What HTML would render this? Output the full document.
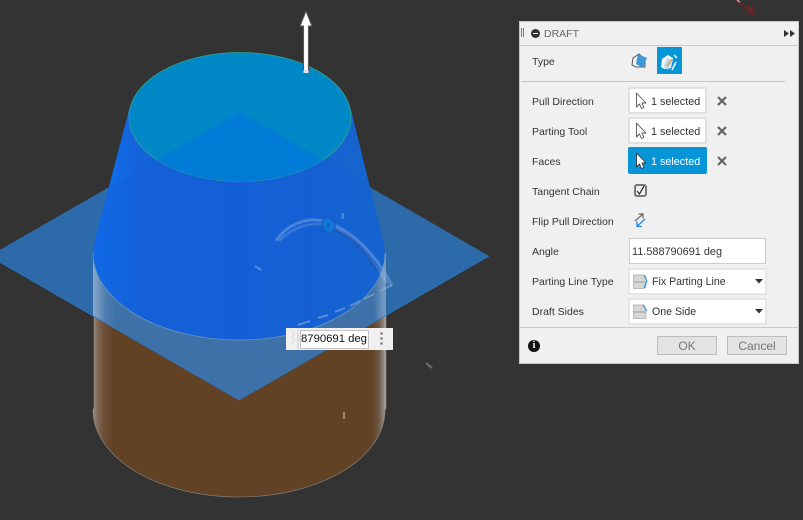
<!DOCTYPE html>
<html><head><meta charset="utf-8">
<style>
html,body{margin:0;padding:0;width:803px;height:520px;overflow:hidden;background:#333}
body{position:relative;font-family:"Liberation Sans",Arial,sans-serif;font-size:10.5px;color:#333}
svg{position:absolute;left:0;top:0}
.a{position:absolute;box-sizing:border-box;white-space:nowrap}
.l{position:absolute;left:532px;line-height:14px;margin-top:1px}
.f{position:absolute;left:628px;width:79px;height:27px;background:#fff;border:2px solid #e0e0e0;border-radius:2px;box-sizing:border-box;line-height:27px;padding-left:21px;font-size:10.8px}
.f.on{background:#0696d7;border-color:#0696d7;color:#fff}
.d{position:absolute;left:628px;width:139px;height:27px;background:#fff;border:2px solid #e6e6e6;box-sizing:border-box;line-height:25px;padding-left:22px;font-size:10.6px}
.btn{position:absolute;top:336px;width:60px;height:19px;background:#e3e3e3;border:1px solid #bdbdbd;box-sizing:border-box;text-align:center;line-height:18px;font-size:12px;color:#777}
</style></head><body>
<svg width="803" height="520" viewBox="0 0 803 520">
<defs>
<linearGradient id="br" x1="93" x2="385" y1="0" y2="0" gradientUnits="userSpaceOnUse">
<stop offset="0" stop-color="#a09488"/><stop offset=".012" stop-color="#84705f"/><stop offset=".035" stop-color="#6f5038"/><stop offset=".07" stop-color="#614225"/><stop offset=".955" stop-color="#614225"/><stop offset=".98" stop-color="#6f5a48"/><stop offset=".995" stop-color="#8f867e"/><stop offset="1" stop-color="#a8a09a"/>
</linearGradient>
<linearGradient id="bl" x1="93" x2="385" y1="0" y2="0" gradientUnits="userSpaceOnUse">
<stop offset="0" stop-color="#1070f0"/><stop offset=".07" stop-color="#106ce8"/><stop offset=".16" stop-color="#1462da"/><stop offset=".5" stop-color="#1560d6"/><stop offset="1" stop-color="#1665cc"/>
</linearGradient>
<linearGradient id="wl" x1="93" x2="385" y1="0" y2="0" gradientUnits="userSpaceOnUse">
<stop offset="0" stop-color="#fff" stop-opacity=".4"/><stop offset=".045" stop-color="#fff" stop-opacity=".08"/><stop offset=".08" stop-color="#fff" stop-opacity="0"/><stop offset=".96" stop-color="#fff" stop-opacity="0"/><stop offset="1" stop-color="#fff" stop-opacity=".3"/>
</linearGradient>
<clipPath id="top"><ellipse cx="240" cy="117" rx="111" ry="64.5"/></clipPath>
<clipPath id="cyl"><path d="M93 253V410C93 458 158 497 239 497C320 497 385 458 385 410V253Z"/></clipPath>
<clipPath id="plane"><path d="M-11 256L240 112L489 256L239 400Z"/></clipPath>
<clipPath id="cone"><path d="M129 110L95 240L93 253C93 301 158 340 239 340C320 340 385 301 385 253L383 240L351 110Z"/></clipPath>
<filter id="b" x="-20%" y="-20%" width="140%" height="140%"><feGaussianBlur stdDeviation=".7"/></filter>
</defs>
<!-- brown cylinder -->
<path d="M94 253V408L93 410C93 458 158 497 239 497C320 497 385 458 385 410L386 408V253Z" fill="url(#br)" stroke="#8f8a84" stroke-width=".6"/>
<!-- plane -->
<path d="M-11 256L240 112L489 256L239 400Z" fill="#2d6aa9"/>
<path d="M-11 256L240 112L489 256L239 400Z" fill="#3d71a8" clip-path="url(#cyl)"/>
<g clip-path="url(#plane)"><rect x="93" y="253" width="293" height="160" fill="url(#wl)"/></g>
<path d="M-11 256L239 400L489 256" fill="none" stroke="#2b74c4" stroke-width=".8"/>
<!-- blue cone -->
<path d="M129 110L95 240L93 253C93 301 158 340 239 340C320 340 385 301 385 253L383 240L351 110Z" fill="url(#bl)"/>
<path d="M240 112L489 256L239 400L-11 256Z" fill="#1560d8" opacity=".4" clip-path="url(#cone)"/>
<path d="M93 253C93 301 158 340 239 340C320 340 385 301 385 253" fill="none" stroke="#6f93bd" stroke-width=".8"/>
<!-- top face -->
<ellipse cx="240" cy="117" rx="111" ry="64.5" fill="#0088c6" stroke="#2fa58c" stroke-width=".8"/>
<path d="M240 112L370 187H110Z" fill="#007cd6" clip-path="url(#top)"/>
<!-- arrow -->
<path d="M306 11L312 26H308.500V72H303.500V26H300Z" fill="#fff" stroke="#555" stroke-width="1.100" stroke-linejoin="round"/>
<path d="M303.500 70H308.500V73H303.500Z" fill="#dfe8f0"/>
<!-- angle manipulator -->
<g fill="none" filter="url(#b)">
<path d="M276 241C287 224 308 216 327 222C355 232 378 258 392 286" stroke="#8fb3e6" stroke-width="2.400" opacity=".55"/>
<path d="M279 241C292 228 310 221 328 225C350 233 372 258 388 284" stroke="#ffffff" stroke-width="1.300" opacity=".3"/>
<path d="M333 228C350 236 366 252 379 272" stroke="#123f88" stroke-width="1.600" opacity=".7"/>
</g>
<path d="M392 285L380 291M374 294L364 299M360 301L350 306M345 308L335 312M328 315L318 318M310 321L298 325" fill="none" stroke="#9ab7d4" stroke-width="2" opacity=".5"/>
<ellipse cx="328.500" cy="225" rx="7.500" ry="9" fill="#1a5cb8" opacity=".75" transform="rotate(-20 328.500 225)"/>
<ellipse cx="328.500" cy="225" rx="5.500" ry="7" fill="#0b78e0" transform="rotate(-20 328.500 225)"/>
<ellipse cx="328.500" cy="225" rx="1.500" ry="2.500" fill="#1a5ca8"/>
<!-- small ticks -->
<path d="M342.800 213V219" stroke="#a9bfe4" stroke-width="2" opacity=".45"/>
<path d="M255 266L261 270" stroke="#a0bde8" stroke-width="2" opacity=".45"/>
<path d="M426 363L432 368" stroke="#8a8a8a" stroke-width="2.400" opacity=".6"/>
<path d="M344 412V419" stroke="#a99a88" stroke-width="2.200" opacity=".8"/>
<!-- axis x -->
<path d="M736 0L746 8" stroke="#7a2228" stroke-width="1.500"/>
<path d="M737 0L740 2" stroke="#aaa" stroke-width="1.500"/>
<text x="746" y="15" font-family="Liberation Sans" font-size="13" font-weight="bold" fill="#8b1a1f">X</text>
</svg>

<!-- value box -->
<div class="a" style="left:286px;top:328px;width:107px;height:22px;background:#f0f0f0"></div>
<div class="a" style="left:297px;top:328px;width:2px;height:22px;background:#ddd"></div>
<div class="a" style="left:300px;top:330px;width:69px;height:19px;background:#fff;border:1px solid #c4c4c4;font-size:11.300px;line-height:17px;color:#111;overflow:hidden">8790691 deg</div>
<svg width="803" height="520" style="pointer-events:none"><g fill="#8a8a8a"><circle cx="381.500" cy="333.500" r="1.400"/><circle cx="381.500" cy="338.500" r="1.400"/><circle cx="381.500" cy="343.500" r="1.400"/></g><path d="M292 331L294 334L292 337L294 340L292 343L294 346" fill="none" stroke="#ccc" stroke-dasharray="1 1"/></svg>

<!-- panel -->
<div class="a" style="left:519px;top:21px;width:280px;height:343px;background:#f0f0f0;border:1px solid #c9c9c9"></div>
<div class="a" style="left:520px;top:45px;width:278px;height:1px;background:#c9c9c9"></div>
<div class="a" style="left:521px;top:28px;width:1px;height:9px;background:#777"></div>
<div class="a" style="left:523px;top:28px;width:1px;height:9px;background:#777"></div>
<div class="a" style="left:531px;top:29px;width:9px;height:9px;background:#333;border-radius:50%"></div>
<div class="a" style="left:533px;top:33px;width:5px;height:1px;background:#fff"></div>
<div class="a" style="left:544px;top:27px;line-height:14px;color:#666">DRAFT</div>
<svg width="803" height="520"><path d="M784 30V37L789 33.500ZM790 30V37L795 33.500Z" fill="#333"/></svg>

<div class="l" style="top:54px">Type</div>
<div class="a" style="left:657px;top:47px;width:25px;height:27px;background:#0696d7"></div>
<svg width="803" height="520">
<path d="M632 65L633 58L639 54L645 59L645 67L636 67Z" fill="#f4f4f4" stroke="#555" stroke-width="1"/>
<path d="M638 54L647 58L643 68L636 64Z" fill="#3f97d9"/>
<path d="M661 67L662 59L668 55L673 58L671 68L664 69Z" fill="#f4f4f4"/>
<path d="M667 58L673 61L668 70L664 66Z" fill="#bcd9ee"/>
<path d="M667 66L672 59" stroke="#e49a3c" stroke-width="1.500"/>
<path d="M674 55L677 58M676 62L672 70" stroke="#fff" stroke-width="1.500"/>
</svg>
<div class="a" style="left:521px;top:81px;width:264px;height:1px;background:#c4c4c4"></div>

<div class="l" style="top:94px">Pull Direction</div>
<div class="f" style="top:87px;overflow:hidden">1 selected</div>
<div class="l" style="top:124px">Parting Tool</div>
<div class="f" style="top:117px;overflow:hidden">1 selected</div>
<div class="l" style="top:154px">Faces</div>
<div class="f on" style="top:147px;overflow:hidden">1 selected</div>
<svg width="803" height="520">
<g fill="#fff" stroke="#555" stroke-width=".9" stroke-linejoin="round">
<path d="M636.500 93V107L639.500 104L641.500 108.500L644 107.500L642 103H646Z"/>
<path d="M636.500 123V137L639.500 134L641.500 138.500L644 137.500L642 133H646Z"/>
<path d="M636.500 153V167L639.500 164L641.500 168.500L644 167.500L642 163H646Z" stroke="#333"/>
</g>
<g stroke="#666" stroke-width="2.200">
<path d="M718 97L726 105M726 97L718 105"/>
<path d="M718 127L726 135M726 127L718 135"/>
<path d="M718 157L726 165M726 157L718 165"/>
</g>
</svg>

<div class="l" style="top:184px">Tangent Chain</div>
<div class="a" style="left:634px;top:184px;width:13px;height:13px;background:#f0f0f0;border:2px solid #777;border-radius:3px"></div>
<svg width="803" height="520"><path d="M637 191L639.500 194L644 186" fill="none" stroke="#222" stroke-width="1.200"/>
<path d="M635 221L642.500 214.500M638.500 214H643V218.500" fill="none" stroke="#666" stroke-width="1.200"/>
<path d="M645 219L637.500 226M637 221.500V226.500H642" fill="none" stroke="#1f8ae0" stroke-width="1.300"/></svg>
<div class="l" style="top:214px">Flip Pull Direction</div>

<div class="l" style="top:244px">Angle</div>
<div class="a" style="left:629px;top:238px;width:137px;height:26px;background:#fff;border:1px solid #ccc;line-height:27px;padding-left:2px;font-size:10.9px;overflow:hidden">11.588790691 deg</div>

<div class="l" style="top:274px">Parting Line Type</div>
<div class="d" style="top:268px">Fix Parting Line</div>
<div class="l" style="top:304px">Draft Sides</div>
<div class="d" style="top:298px">One Side</div>
<svg width="803" height="520">
<path d="M633.500 275H644L646 277V287L644 288.500H633.500Z" fill="#d6d6d6" stroke="#aaa" stroke-width=".7"/>
<path d="M633.500 282H645" stroke="#888" stroke-width=".8"/>
<path d="M644 275L647 281L644 288" fill="none" stroke="#1f8ae0" stroke-width="1"/>
<path d="M633.500 305H644L646 311V318.500H633.500Z" fill="#d6d6d6" stroke="#aaa" stroke-width=".7"/>
<path d="M633.500 312H646" stroke="#888" stroke-width=".8"/>
<path d="M643 305L647 311" fill="none" stroke="#1f8ae0" stroke-width="1"/>
<path d="M755 279H763L759 283.500ZM755 309H763L759 313.500Z" fill="#333"/>
</svg>

<div class="a" style="left:520px;top:327px;width:278px;height:1px;background:#c9c9c9"></div>
<div class="a" style="left:528px;top:340px;width:12px;height:12px;background:#111;border-radius:50%;color:#fff;font:bold 10px/12px 'Liberation Serif',serif;text-align:center">i</div>
<div class="btn" style="left:657px">OK</div>
<div class="btn" style="left:727px">Cancel</div>
</body></html>
